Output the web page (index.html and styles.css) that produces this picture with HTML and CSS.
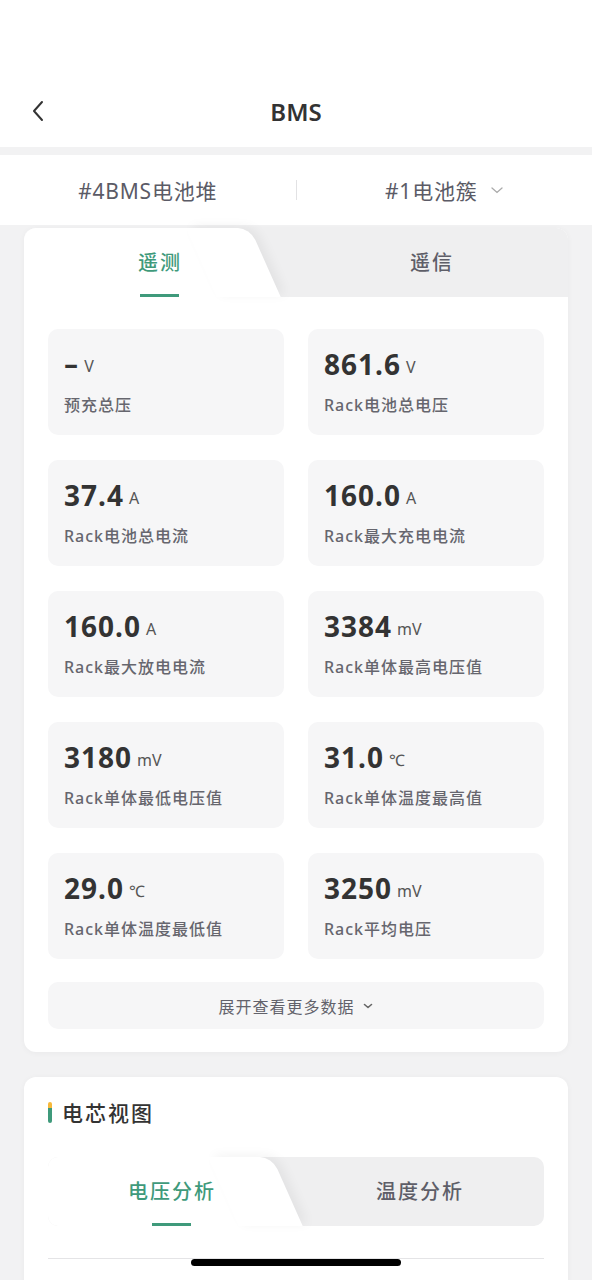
FILE: index.html
```html
<!DOCTYPE html>
<html lang="zh-CN">
<head>
<meta charset="utf-8">
<title>BMS</title>
<link rel="stylesheet" href="styles.css">
</head>
<body>
<header class="header">
  <div class="status"></div>
  <div class="navbar">
    <svg class="back" width="14" height="22" viewBox="0 0 14 22"><path d="M11 2 L3 11 L11 20" fill="none" stroke="#333" stroke-width="2" stroke-linecap="round" stroke-linejoin="round"/></svg>
    <h1 class="title">BMS</h1>
  </div>
</header>
<div class="selector">
  <div class="sel-item">#4BMS电池堆</div>
  <div class="sel-divider"></div>
  <div class="sel-item">#1电池簇<svg class="sel-chev" width="14" height="9" viewBox="0 0 14 9"><path d="M2 2 L7 6.5 L12 2" fill="none" stroke="#aaa" stroke-width="1.3" stroke-linecap="round"/></svg></div>
</div>
<main class="content">
  <section class="card">
    <div class="tabs tabs-top">
      <div class="tab active"><span>遥测</span><i class="underline"></i></div>
      <div class="tab"><span>遥信</span></div>
    </div>
    <div class="grid">
      <div class="metric"><div class="val"><b class="dash">-</b><span class="unit">V</span></div><div class="lbl">预充总压</div></div>
      <div class="metric"><div class="val"><b>861.6</b><span class="unit">V</span></div><div class="lbl">Rack电池总电压</div></div>
      <div class="metric"><div class="val"><b>37.4</b><span class="unit">A</span></div><div class="lbl">Rack电池总电流</div></div>
      <div class="metric"><div class="val"><b>160.0</b><span class="unit">A</span></div><div class="lbl">Rack最大充电电流</div></div>
      <div class="metric"><div class="val"><b>160.0</b><span class="unit">A</span></div><div class="lbl">Rack最大放电电流</div></div>
      <div class="metric"><div class="val"><b>3384</b><span class="unit">mV</span></div><div class="lbl">Rack单体最高电压值</div></div>
      <div class="metric"><div class="val"><b>3180</b><span class="unit">mV</span></div><div class="lbl">Rack单体最低电压值</div></div>
      <div class="metric"><div class="val"><b>31.0</b><span class="unit">℃</span></div><div class="lbl">Rack单体温度最高值</div></div>
      <div class="metric"><div class="val"><b>29.0</b><span class="unit">℃</span></div><div class="lbl">Rack单体温度最低值</div></div>
      <div class="metric"><div class="val"><b>3250</b><span class="unit">mV</span></div><div class="lbl">Rack平均电压</div></div>
    </div>
    <div class="expand">展开查看更多数据<svg class="exp-chev" width="12" height="8" viewBox="0 0 12 8"><path d="M2.5 2.5 L6 5.5 L9.5 2.5" fill="none" stroke="#666" stroke-width="1.6" stroke-linecap="round" stroke-linejoin="round"/></svg></div>
  </section>

  <section class="card card2">
    <h2 class="sec-title"><i class="sec-bar"></i>电芯视图</h2>
    <div class="tabs tabs-inner">
      <div class="tab active"><span>电压分析</span><i class="underline"></i></div>
      <div class="tab"><span>温度分析</span></div>
    </div>
    <div class="rule"></div>
  </section>
</main>
<div class="home-indicator"></div>
</body>
</html>
```

FILE: styles.css
```css
* { box-sizing: border-box; }
html, body { margin: 0; padding: 0; }
body {
  width: 592px;
  min-height: 1280px;
  background: #f2f2f3;
  font-family: "Noto Sans CJK SC", "Noto Sans", sans-serif;
  color: #333;
}
.header { background: #fff; }
.status { height: 80px; }
.navbar {
  height: 67px;
  display: flex;
  align-items: center;
  justify-content: center;
  position: relative;
}
.back { position: absolute; left: 31px; top: 20px; }
.title {
  margin: 0;
  font-family: "Noto Sans", "Noto Sans CJK SC", sans-serif;
  font-size: 24px;
  font-weight: 600;
  color: #333;
  line-height: 1;
  margin-top: -4px;
}
.selector {
  margin-top: 8px;
  height: 70px;
  background: #fff;
  display: flex;
  align-items: center;
}
.sel-item {
  flex: 1;
  text-align: center;
  font-size: 21px;
  color: #5b5b66;
  letter-spacing: 0.8px;
  display: flex;
  align-items: center;
  justify-content: center;
  font-family: "Noto Sans", "Noto Sans CJK SC", sans-serif;
}
.sel-chev { margin-left: 12px; }
.sel-divider { width: 1px; height: 20px; background: #e2e2e4; }
.content { padding: 3px 24px 0; }
.card {
  background: #fff;
  border-radius: 12px;
  box-shadow: 0 1px 6px rgba(0,0,0,0.04);
  padding-bottom: 23px;
}
.tabs {
  display: grid;
  grid-template-columns: 1fr 1fr;
  background: #efeff0;
  height: 69px;
}
.tabs-top { border-radius: 12px 12px 0 0; }
.tab {
  position: relative;
  display: flex;
  align-items: center;
  justify-content: center;
  font-size: 20px;
  font-weight: 500;
  letter-spacing: 2px;
  color: #5e5e68;
  z-index: 0;
}
.tab span { margin-top: -2px; }
.tab.active { color: #3f9a7b; }
.tab.active::before {
  content: "";
  position: absolute;
  left: 0; top: 0; bottom: 0;
  right: 60px;
  background: #fff;
  border-top-left-radius: 12px;
  z-index: -1;
}
.tab.active::after {
  content: "";
  position: absolute;
  top: 0; bottom: 0;
  right: 46px;
  width: 64px;
  background: #fff;
  transform: skewX(24deg);
  transform-origin: top;
  border-top-right-radius: 12px;
  box-shadow: 6px -2px 10px rgba(0,0,0,0.05);
  z-index: -1;
}
.underline {
  position: absolute;
  bottom: 0;
  width: 39px;
  height: 3px;
  background: #3f9a7b;
}
.tabs-top .underline { left: 116px; }
.grid {
  display: grid;
  grid-template-columns: 1fr 1fr;
  column-gap: 24px;
  row-gap: 25px;
  padding: 32px 24px 0;
}
.metric {
  height: 106px;
  background: #f6f6f7;
  border-radius: 10px;
  padding: 20px 16px 0;
}
.val {
  height: 30px;
  display: flex;
  align-items: baseline;
  line-height: 30px;
}
.val b {
  font-family: "Noto Sans", sans-serif;
  font-weight: 700;
  font-size: 28px;
  letter-spacing: 1px;
  color: #333;
}
.val b.dash {
  display: inline-block;
  font-size: 26px;
  transform: scaleX(1.7);
  transform-origin: left;
  margin-right: 6px;
}
.unit {
  margin-left: 5px;
  font-family: "Noto Sans", "Noto Sans CJK SC", sans-serif;
  font-size: 16px;
  color: #555;
  position: relative;
  top: -2px;
}
.lbl {
  margin-top: 14px;
  line-height: 24px;
  font-size: 16px;
  font-weight: 500;
  letter-spacing: 1px;
  color: #66666e;
  font-family: "Noto Sans", "Noto Sans CJK SC", sans-serif;
}
.expand {
  margin: 23px 24px 0;
  height: 47px;
  background: #f6f6f7;
  border-radius: 10px;
  display: flex;
  align-items: center;
  justify-content: center;
  font-size: 16px;
  letter-spacing: 1px;
  color: #62626b;
}
.exp-chev { margin-left: 7px; }
.card2 {
  margin-top: 25px;
  padding: 24px 24px 30px;
  border-radius: 12px 12px 0 0;
}
.sec-title {
  margin: 0;
  display: flex;
  align-items: center;
  font-size: 21px;
  font-weight: 500;
  letter-spacing: 2px;
  color: #333;
  height: 22px;
}
.sec-bar {
  width: 4px;
  height: 21px;
  border-radius: 2px;
  margin-right: 10px;
  background: linear-gradient(#f6b83a 0 30%, #3f9a7b 30% 100%);
}
.tabs-inner {
  margin-top: 34px;
  border-radius: 10px;
}
.tabs-inner .tab.active::before { border-top-left-radius: 10px; border-bottom-left-radius: 10px; right: 40px; }
.tabs-inner .tab.active::after { right: 24px; }
.tabs-inner .underline { left: 104px; }
.rule {
  margin-top: 32px;
  height: 1px;
  background: #e4e4e6;
}
.home-indicator {
  position: fixed;
  left: 191px;
  top: 1259px;
  width: 210px;
  height: 7px;
  border-radius: 4px;
  background: #000;
}
```
